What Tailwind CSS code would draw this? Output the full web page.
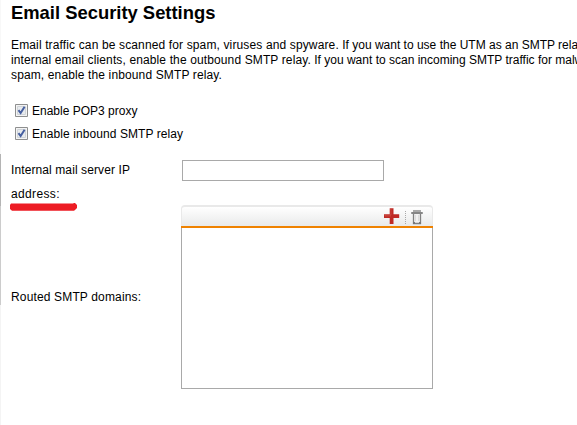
<!DOCTYPE html>
<html lang="en">
<head>
<meta charset="utf-8">
<title>Email Security Settings</title>
<script src="https://cdn.jsdelivr.net/npm/@tailwindcss/browser@4"></script>
</head>
<body class="flex h-[425px] w-[577px] overflow-hidden bg-white font-['Liberation_Sans',Arial,sans-serif] text-[12px] leading-[15px] text-black">
<aside class="flex w-px shrink-0 flex-col">
  <div class="h-[154px] bg-[#f8f8f8]"></div>
  <div class="h-[52px] bg-[#b4b4b4]"></div>
  <div class="h-[99px] bg-[#cccccc]"></div>
  <div class="grow bg-[#f4f4f4]"></div>
</aside>
<main class="w-[576px] shrink-0 overflow-hidden pl-[10px]">
  <h1 class="h-[38px] pt-[2px] text-[18.4px] leading-[22px] font-bold whitespace-nowrap">Email Security Settings</h1>
  <div class="h-[64px] whitespace-nowrap">
    <p><span class="tracking-[0.135px]">Email traffic can be scanned for spam, viruses and spyware.</span> If you want to use the UTM as an SMTP rela</p>
    <p><span class="tracking-[0.125px]">internal email clients, enable the outbound SMTP relay.</span> If you want to scan incoming SMTP traffic for malw</p>
    <p class="tracking-[0.13px]">spam, enable the inbound SMTP relay.</p>
  </div>
  <div class="flex h-[58px] flex-col gap-[5px] pl-[4px]">
    <label class="flex h-[18px] items-center gap-[4px]">
      <svg class="mb-[2px] size-[13px]" viewBox="0 0 13 13"><path d="M.5.5h12v12H.5z" fill="#f4f4f4" stroke="#8e8f8f"/><path d="M2.5 2.5h8v8h-8z" fill="#e8ebee" stroke="#d0d4d8"/><path d="M3.5 6.2 5.6 9 9.6 2.8" fill="none" stroke="#465fa0" stroke-width="2"/></svg>
      <span class="pt-px">Enable POP3 proxy</span>
    </label>
    <label class="flex h-[18px] items-center gap-[4px]">
      <svg class="mb-[2px] size-[13px]" viewBox="0 0 13 13"><path d="M.5.5h12v12H.5z" fill="#f4f4f4" stroke="#8e8f8f"/><path d="M2.5 2.5h8v8h-8z" fill="#e8ebee" stroke="#d0d4d8"/><path d="M3.5 6.2 5.6 9 9.6 2.8" fill="none" stroke="#465fa0" stroke-width="2"/></svg>
      <span class="pt-px tracking-[0.08px]">Enable inbound SMTP relay</span>
    </label>
  </div>
  <div class="flex h-[45px]">
    <div class="w-[171px]">
      <div class="h-[23px] pt-[3px] tracking-[0.1px]">Internal mail server IP</div>
      <div class="h-[20px] pt-[4px] tracking-[0.35px]">address:</div>
      <svg class="-ml-px block h-[8px] w-[67px]" viewBox="0 0 67 8"><path d="M1 .4h62L64 0h1l2 2v3l-2 2-1 .8H2L0 6V2z" fill="#ed1c24"/></svg>
    </div>
    <input aria-label="Internal mail server IP address" class="h-[21px] w-[202px] border border-[#a9a9a9] bg-white">
  </div>
  <div class="flex h-[184px]">
    <div class="w-[170px] pt-[85px] tracking-[0.15px]">Routed SMTP domains:</div>
    <section class="flex w-[252px] flex-col">
      <div class="flex h-[21px] justify-end rounded-t-[4px] border-x border-t-2 border-[#e9e9e9] bg-gradient-to-b from-white to-[#e9eaea]">
        <svg class="h-[19px] w-[50px]" viewBox="0 0 50 19"><path d="M7.7 1.3h3.8v6h5.7v3.6h-5.7v6H7.7v-6H2V7.3h5.7z" fill="#bf2a25"/><path d="M8 2h1v6H3v1h6" fill="none" stroke="#d46a62" stroke-width=".4"/><path d="M23.5 4v13" stroke="#aaa" stroke-dasharray="1 1"/><path d="M29.5 5.5h11v1h-11z" fill="#ddd" stroke="#858585"/><path d="M31 3h8v2h-8z" fill="#a8a8a8"/><path d="M31.5 7v9.5h7V7" fill="#f1f1f1" stroke="#808080" stroke-width="1.3"/><path d="M33.5 8v6M36.5 8v6" stroke="#dcdcdc"/><path d="M31 15h2v2h-2zM37 15h2v2h-2z" fill="#777"/></svg>
      </div>
      <div class="h-[2px] bg-[#ef8200]"></div>
      <div class="grow border border-t-0 border-[#a9a9a9]"></div>
    </section>
  </div>
</main>
</body>
</html>
